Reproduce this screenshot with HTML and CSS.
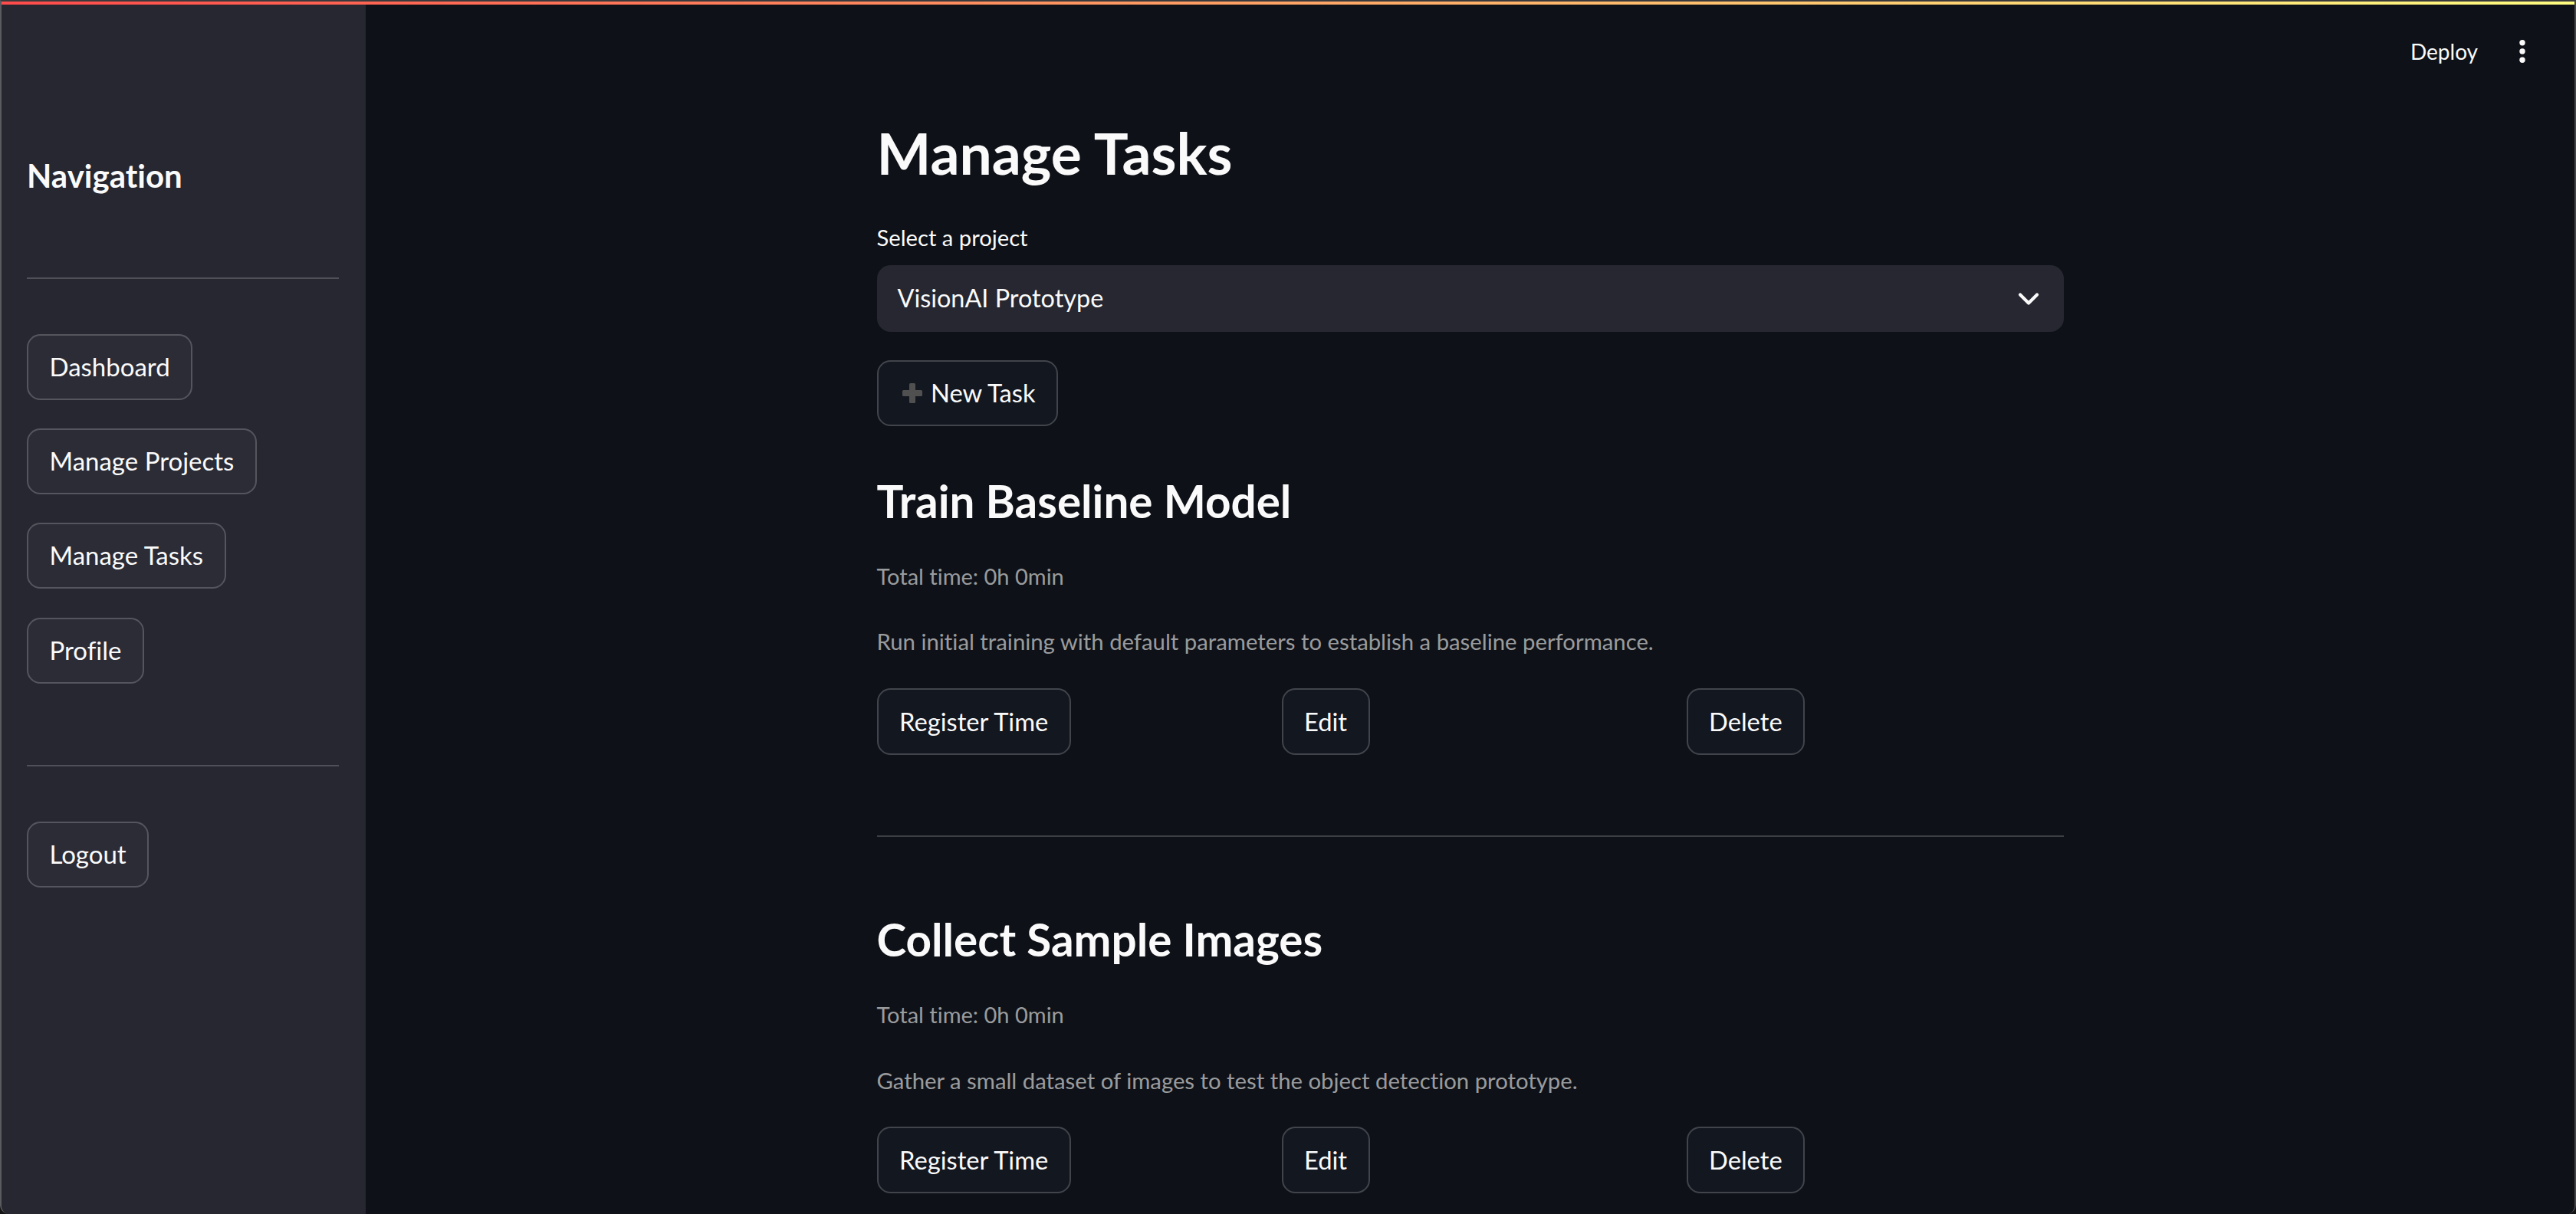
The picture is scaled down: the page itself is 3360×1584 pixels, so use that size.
FILE: index.html
```html
<!DOCTYPE html>
<html lang="en">
<head>
<meta charset="utf-8">
<title>Manage Tasks</title>
<link rel="stylesheet" href="styles.css">
</head>
<body>
<div class="window">
  <div class="decoration"></div>
  <div class="app">
    <aside class="sidebar">
      <h2 class="sb-title">Navigation</h2>
      <hr class="sb-rule">
      <nav class="sb-nav">
        <button class="btn sb-btn">Dashboard</button>
        <button class="btn sb-btn">Manage Projects</button>
        <button class="btn sb-btn">Manage Tasks</button>
        <button class="btn sb-btn">Profile</button>
      </nav>
      <hr class="sb-rule sb-rule-bottom">
      <button class="btn sb-btn">Logout</button>
    </aside>

    <main class="main">
      <header class="topbar">
        <span class="deploy">Deploy</span>
        <svg class="kebab" width="40" height="40" viewBox="0 0 40 40" aria-hidden="true">
          <circle cx="20" cy="8.7" r="3.7"/>
          <circle cx="20" cy="20" r="3.7"/>
          <circle cx="20" cy="31.3" r="3.7"/>
        </svg>
      </header>

      <section class="content">
        <h1 class="page-title">Manage Tasks</h1>
        <label class="field-label">Select a project</label>
        <div class="select">
          <span class="select-value">VisionAI Prototype</span>
          <svg class="chevron" width="44" height="44" viewBox="0 0 24 24" aria-hidden="true">
            <path d="M6 9 L12 15 L18 9"/>
          </svg>
        </div>
        <button class="btn main-btn new-task">
          <svg class="plus" width="26" height="26" viewBox="0 0 26 26" aria-hidden="true">
            <rect x="0" y="9" width="26" height="8" rx="1.5"/>
            <rect x="9" y="0" width="8" height="26" rx="1.5"/>
          </svg>
          <span>New Task</span>
        </button>

        <article class="task">
          <h2 class="task-title">Train Baseline Model</h2>
          <p class="task-time">Total time: 0h 0min</p>
          <p class="task-desc">Run initial training with default parameters to establish a baseline performance.</p>
          <div class="task-actions">
            <button class="btn main-btn">Register Time</button>
            <button class="btn main-btn">Edit</button>
            <button class="btn main-btn">Delete</button>
          </div>
        </article>

        <hr class="task-rule">

        <article class="task">
          <h2 class="task-title">Collect Sample Images</h2>
          <p class="task-time">Total time: 0h 0min</p>
          <p class="task-desc">Gather a small dataset of images to test the object detection prototype.</p>
          <div class="task-actions">
            <button class="btn main-btn">Register Time</button>
            <button class="btn main-btn">Edit</button>
            <button class="btn main-btn">Delete</button>
          </div>
        </article>
      </section>
    </main>
  </div>
</div>
</body>
</html>
```

FILE: styles.css
```css
* { box-sizing: border-box; }

html, body {
  margin: 0;
  padding: 0;
  background: #141414;
  font-family: "Lato", "Noto Sans", sans-serif;
  font-variant-ligatures: none;
  color: #fafafa;
}

.window {
  height: 1584px;
  display: flex;
  flex-direction: column;
  border-top: 2px solid #3a3a3d;
  border-left: 2px solid #5a5b60;
  border-right: 2px solid #45464b;
  border-bottom-left-radius: 12px;
  border-bottom-right-radius: 12px;
  overflow: hidden;
  background: #0e1117;
}

.decoration {
  height: 4px;
  flex: none;
  background: linear-gradient(90deg, #ff4b4b, #fffd80);
}

.app {
  flex: 1;
  display: flex;
  min-height: 0;
}

/* ---------- Sidebar ---------- */
.sidebar {
  width: 475px;
  flex: none;
  background: #262730;
  padding: 198.6px 35px 0 33px;
  display: flex;
  flex-direction: column;
  align-items: flex-start;
}

.sb-title {
  margin: 0;
  font-size: 42px;
  line-height: 49.8px;
  font-weight: 700;
}

.sb-rule {
  align-self: stretch;
  border: 0;
  height: 2px;
  background: rgba(250, 250, 250, 0.2);
  margin: 108px 0 71.3px;
}

.sb-rule-bottom {
  margin: 106.4px 0 71.7px;
}

.sb-nav {
  display: flex;
  flex-direction: column;
  align-items: flex-start;
  gap: 37.3px;
}

/* ---------- Buttons ---------- */
.btn {
  display: inline-flex;
  align-items: center;
  height: 86px;
  padding: 0 27.5px;
  border: 2px solid rgba(250, 250, 250, 0.2);
  border-radius: 17.6px;
  font-family: "Lato", "Noto Sans", sans-serif;
  font-variant-ligatures: none;
  font-weight: 400;
  line-height: 1.2;
  color: #fafafa;
  cursor: pointer;
}

.sb-btn {
  background: #2b2c36;
  font-size: 33px;
}

.main-btn {
  background: #131720;
  font-size: 32.7px;
}

/* ---------- Main ---------- */
.main {
  flex: 1;
  min-width: 0;
  display: flex;
  flex-direction: column;
  background: #0e1117;
}

.topbar {
  height: 122px;
  flex: none;
  display: flex;
  justify-content: flex-end;
  align-items: center;
  gap: 38px;
  padding-right: 48px;
}

.deploy {
  font-size: 28px;
  line-height: 40px;
}

.kebab { fill: #fafafa; }

.content {
  width: 1548px;
  margin: 0 auto;
  padding-top: 27px;
  display: flex;
  flex-direction: column;
  align-items: flex-start;
}

.page-title {
  margin: 0;
  font-size: 75px;
  line-height: 88.8px;
  font-weight: 700;
}

.field-label {
  margin-top: 48px;
  font-size: 29.2px;
  line-height: 35px;
}

.select {
  margin-top: 19.2px;
  align-self: stretch;
  height: 87.3px;
  background: #262730;
  border-radius: 17.6px;
  padding: 0 23.7px 0 27px;
  display: flex;
  align-items: center;
  justify-content: space-between;
}

.select-value {
  font-size: 32.4px;
  line-height: 38.9px;
}

.chevron {
  fill: none;
  stroke: #fafafa;
  stroke-width: 2.3;
  stroke-linecap: round;
  stroke-linejoin: round;
}

.new-task {
  margin-top: 36.7px;
  gap: 11px;
}

.plus {
  fill: #505050;
  margin-left: 4px;
}

/* ---------- Tasks ---------- */
.task {
  align-self: stretch;
  display: flex;
  flex-direction: column;
  align-items: flex-start;
}

.task:first-of-type { margin-top: 62.7px; }

.task-title {
  margin: 0;
  font-size: 58.4px;
  line-height: 69.8px;
  font-weight: 700;
}

.task-time {
  margin: 46.4px 0 0;
  font-size: 29px;
  line-height: 34.8px;
  color: rgba(250, 250, 250, 0.6);
}

.task-desc {
  margin: 49.8px 0 0;
  font-size: 29.3px;
  line-height: 35.3px;
  color: rgba(250, 250, 250, 0.6);
}

.task-actions {
  margin-top: 43.2px;
  align-self: stretch;
  display: grid;
  grid-template-columns: repeat(3, 1fr);
  gap: 36px;
  justify-items: start;
}

.task-actions .btn { height: 86.6px; }

.task-rule {
  align-self: stretch;
  border: 0;
  height: 2px;
  background: rgba(250, 250, 250, 0.2);
  margin: 105.7px 0 98.7px;
}
```
